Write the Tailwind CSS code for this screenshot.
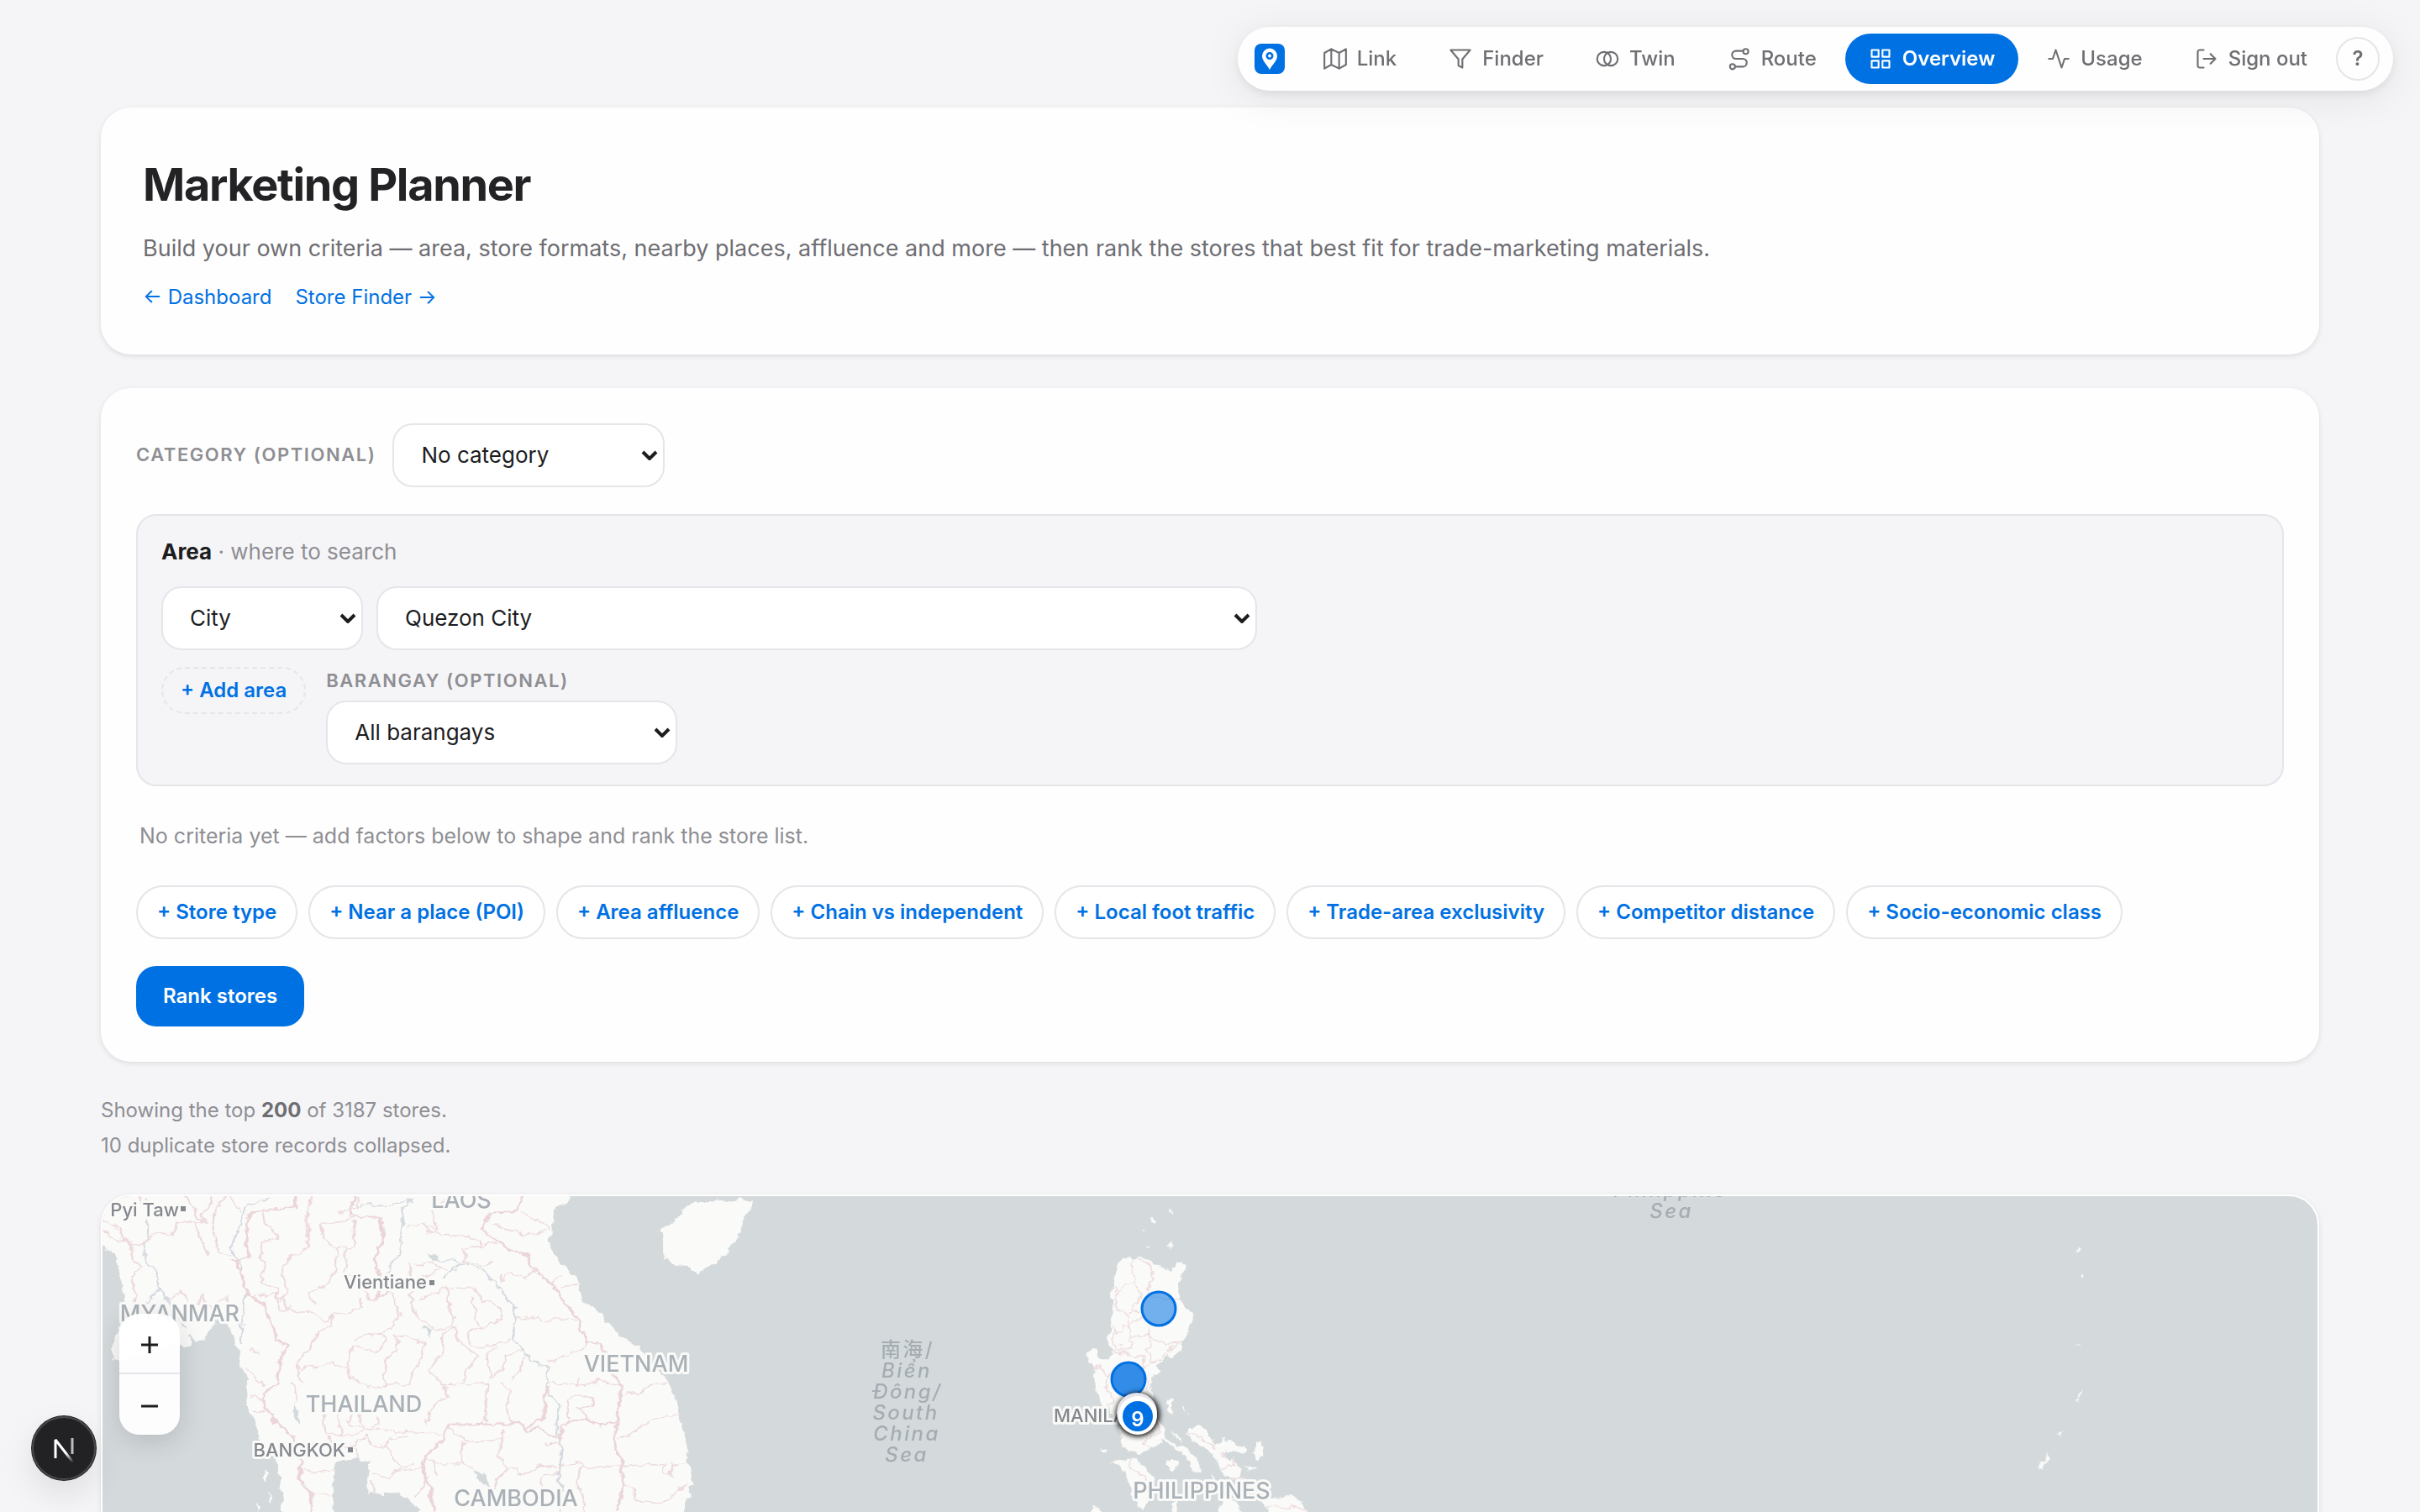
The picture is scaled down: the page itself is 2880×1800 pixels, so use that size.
<!DOCTYPE html>
<html lang="en">
<head>
    <meta charset="UTF-8">
    <meta name="viewport" content="width=device-width, initial-scale=1.0">
    <title>Marketing Planner</title>
    <!-- Tailwind CSS -->
    <script src="https://cdn.jsdelivr.net/npm/@tailwindcss/browser@4"></script>
</head>
<body class="min-h-screen bg-[#f5f5f7] font-['Inter','Liberation_Sans',sans-serif] text-2xl text-[#1d1d1f]">
    <!-- Floating navigation -->
    <nav class="fixed top-8 right-8 z-20 flex h-[76px] items-center gap-1.5 rounded-full bg-[#fefefe] pr-4 pl-5 font-medium text-[#6e6e73] shadow-[0_4px_12px_rgba(0,0,30,0.07),0_8px_48px_rgba(0,0,0,0.08)]">
        <a href="#" aria-label="Home" class="mr-3 flex size-9 items-center justify-center rounded-lg bg-[#0071e3]">
            <svg class="size-9" viewBox="0 0 36 36"><path d="M18 5.500a9 9 0 0 0-9 9c0 6 6 10.500 9 16.500 3-6 9-10.500 9-16.500a9 9 0 0 0-9-9z" fill="#fff"/><circle cx="18" cy="14.500" r="3.200" fill="#fff" stroke="#0071e3" stroke-width="2.600"/></svg>
        </a>
        <a href="#" class="flex h-15 items-center gap-3 rounded-full px-7">
            <svg class="size-7" viewBox="0 0 24 24" fill="none" stroke="currentColor" stroke-width="1.800" stroke-linecap="round" stroke-linejoin="round"><path d="M1 6v16l7-4 8 4 7-4V2l-7 4-8-4-7 4zM8 2v16M16 6v16"/></svg>
            Link
        </a>
        <a href="#" class="flex h-15 items-center gap-3 rounded-full px-7">
            <svg class="size-7" viewBox="0 0 24 24" fill="none" stroke="currentColor" stroke-width="1.800" stroke-linecap="round" stroke-linejoin="round"><path d="M22 3H2l8 9.460V19l4 2v-8.540L22 3z"/></svg>
            Finder
        </a>
        <a href="#" class="flex h-15 items-center gap-3 rounded-full px-7">
            <svg class="size-7" viewBox="0 0 24 24" fill="none" stroke="currentColor" stroke-width="1.800"><circle cx="8.500" cy="12" r="7"/><circle cx="15.500" cy="12" r="7"/></svg>
            Twin
        </a>
        <a href="#" class="flex h-15 items-center gap-3 rounded-full px-7">
            <svg class="size-7" viewBox="0 0 24 24" fill="none" stroke="currentColor" stroke-width="1.800" stroke-linecap="round"><circle cx="5" cy="20" r="2.600"/><circle cx="18.500" cy="4.500" r="2.600"/><path d="M8 20h7.500a4 4 0 0 0 0-8h-7a4 4 0 0 1 0-8H15.500"/></svg>
            Route
        </a>
        <a href="#" aria-current="page" class="flex h-15 items-center gap-3 rounded-full bg-[#0071e3] px-7 font-semibold text-white">
            <svg class="size-7" viewBox="0 0 24 24" fill="none" stroke="currentColor" stroke-width="1.800" stroke-linejoin="round"><rect x="3" y="3" width="7" height="7"/><rect x="14" y="3" width="7" height="7"/><rect x="3" y="14" width="7" height="7"/><rect x="14" y="14" width="7" height="7"/></svg>
            Overview
        </a>
        <a href="#" class="flex h-15 items-center gap-3 rounded-full px-7">
            <svg class="size-7" viewBox="0 0 24 24" fill="none" stroke="currentColor" stroke-width="1.800" stroke-linecap="round" stroke-linejoin="round"><path d="M22 12h-4l-3 9L9 3l-3 9H2"/></svg>
            Usage
        </a>
        <button type="button" class="flex h-15 items-center gap-3 rounded-full px-7">
            <svg class="size-7" viewBox="0 0 24 24" fill="none" stroke="currentColor" stroke-width="1.800" stroke-linecap="round" stroke-linejoin="round"><path d="M9 21H5a2 2 0 0 1-2-2V5a2 2 0 0 1 2-2h4M16 17l5-5-5-5M21 12H9"/></svg>
            Sign out
        </button>
        <button type="button" aria-label="Help" class="size-13 rounded-full border-2 border-[#e5e5ea] font-semibold">?</button>
    </nav>

    <main class="flex flex-col px-30 pt-32">
        <!-- Page header -->
        <header class="rounded-[36px] bg-[#fefefe] px-[50px] pt-15 pb-[50px] shadow-[0_2px_6px_rgba(0,0,20,0.10)]">
            <h1 class="text-[54px] leading-16 font-bold tracking-tight text-[#232326]">Marketing Planner</h1>
            <p class="mt-6 text-[27px] leading-10 text-[#6e6e73]">Build your own criteria — area, store formats, nearby places, affluence and more — then rank the stores that best fit for trade-marketing materials.</p>
            <div class="mt-5 flex gap-7 leading-9 text-[#0071e3]">
                <a href="#">← Dashboard</a>
                <a href="#">Store Finder →</a>
            </div>
        </header>

        <!-- Criteria builder -->
        <form class="mt-10 rounded-[36px] bg-[#fefefe] p-[42px] shadow-[0_2px_6px_rgba(0,0,20,0.10)]">
            <div class="flex items-center gap-5">
                <label for="category" class="text-[22px] font-semibold tracking-[0.07em] text-[#8e8e93] uppercase">Category (optional)</label>
                <div class="relative w-[324px]">
                    <select id="category" class="h-19 w-full appearance-none rounded-3xl border-2 border-[#e5e5ea] bg-white px-8 text-[26px]">
                        <option>No category</option>
                    </select>
                    <svg class="pointer-events-none absolute top-8 right-2 h-3 w-5" viewBox="0 0 20 12" fill="none" stroke="#1d1d1f" stroke-width="4"><path d="M2 2l8 8 8-8"/></svg>
                </div>
            </div>

            <fieldset class="mt-8 rounded-3xl border-2 border-[#e5e5ea] bg-[#f5f5f7] px-7 py-6">
                <p class="text-[26px] leading-[38px] text-[#8e8e93]"><strong class="text-[#1d1d1f]">Area</strong> · where to search</p>
                <div class="mt-[22px] flex gap-4">
                    <div class="relative w-60">
                        <select aria-label="Area type" class="h-19 w-full appearance-none rounded-3xl border-2 border-[#e5e5ea] bg-white px-8 text-[26px]">
                            <option>City</option>
                        </select>
                        <svg class="pointer-events-none absolute top-8 right-2 h-3 w-5" viewBox="0 0 20 12" fill="none" stroke="#1d1d1f" stroke-width="4"><path d="M2 2l8 8 8-8"/></svg>
                    </div>
                    <div class="relative w-full max-w-[1048px]">
                        <select aria-label="City" class="h-19 w-full appearance-none rounded-3xl border-2 border-[#e5e5ea] bg-white px-8 text-[26px]">
                            <option>Quezon City</option>
                        </select>
                        <svg class="pointer-events-none absolute top-8 right-2 h-3 w-5" viewBox="0 0 20 12" fill="none" stroke="#1d1d1f" stroke-width="4"><path d="M2 2l8 8 8-8"/></svg>
                    </div>
                </div>
                <div class="mt-5 flex items-start gap-6">
                    <button type="button" class="h-14 rounded-full border-2 border-dashed border-[#e5e5ea] px-[21px] font-semibold text-[#0071e3]">+ Add area</button>
                    <div class="flex flex-col gap-2">
                        <label for="barangay" class="text-[22px] leading-8 font-semibold tracking-[0.07em] text-[#8e8e93] uppercase">Barangay (optional)</label>
                        <div class="relative w-[418px]">
                            <select id="barangay" class="h-19 w-full appearance-none rounded-3xl border-2 border-[#e5e5ea] bg-white px-8 text-[26px]">
                                <option>All barangays</option>
                            </select>
                            <svg class="pointer-events-none absolute top-8 right-2 h-3 w-5" viewBox="0 0 20 12" fill="none" stroke="#1d1d1f" stroke-width="4"><path d="M2 2l8 8 8-8"/></svg>
                        </div>
                    </div>
                </div>
            </fieldset>

            <p class="px-1 py-10 text-[25px] leading-[38px] text-[#8e8e93]">No criteria yet — add factors below to shape and rank the store list.</p>

            <div class="flex flex-wrap gap-[13px] font-semibold text-[#0071e3]">
                <button type="button" class="h-16 rounded-full border-2 border-[#e5e5ea] bg-white px-[23px]">+ Store type</button>
                <button type="button" class="h-16 rounded-full border-2 border-[#e5e5ea] bg-white px-[23px]">+ Near a place (POI)</button>
                <button type="button" class="h-16 rounded-full border-2 border-[#e5e5ea] bg-white px-[23px]">+ Area affluence</button>
                <button type="button" class="h-16 rounded-full border-2 border-[#e5e5ea] bg-white px-[23px]">+ Chain vs independent</button>
                <button type="button" class="h-16 rounded-full border-2 border-[#e5e5ea] bg-white px-[23px]">+ Local foot traffic</button>
                <button type="button" class="h-16 rounded-full border-2 border-[#e5e5ea] bg-white px-[23px]">+ Trade-area exclusivity</button>
                <button type="button" class="h-16 rounded-full border-2 border-[#e5e5ea] bg-white px-[23px]">+ Competitor distance</button>
                <button type="button" class="h-16 rounded-full border-2 border-[#e5e5ea] bg-white px-[23px]">+ Socio-economic class</button>
            </div>
            <button type="submit" class="mt-8 block h-18 rounded-3xl bg-[#0071e3] px-8 font-semibold text-white">Rank stores</button>
        </form>

        <!-- Result summary -->
        <div class="mt-[37px] leading-[42px] text-[#8e8e93]">
            <p>Showing the top <strong class="text-[#6e6e73]">200</strong> of 3187 stores.</p>
            <p>10 duplicate store records collapsed.</p>
        </div>

        <!-- Map -->
        <section aria-label="Store map" class="relative mt-[37px] h-[1104px] overflow-hidden rounded-[36px] border-2 border-white bg-[#d4dadc] shadow-[0_2px_6px_rgba(0,0,20,0.10)]">
            <svg class="block h-full w-full" viewBox="122 1424 2636 1100" preserveAspectRatio="xMinYMin slice">
                <defs>
                    <filter id="rough" x="0" y="0" width="100%" height="100%">
                        <feTurbulence type="fractalNoise" baseFrequency="0.09" numOctaves="3" seed="4"/>
                        <feDisplacementMap in="SourceGraphic" scale="10" xChannelSelector="R" yChannelSelector="G"/>
                    </filter>
                    <filter id="soft" x="-50%" y="-50%" width="200%" height="200%"><feGaussianBlur stdDeviation="3"/></filter>
                </defs>

                <g filter="url(#rough)">
                    <!-- Mainland and Hainan -->
                    <g transform="translate(0 1400) scale(0.574 0.3333)" fill="#fafaf8">
                        <path d="M200 60H1188L1172 95 1150 110 1148 190 1135 235 1148 280 1165 320 1190 355 1203 380 1200 410 1215 450 1245 490 1265 540 1295 580 1325 615 1345 660 1370 710 1390 750 1398 800 1408 860 1418 910 1420 960 1425 1010 1438 1100 1425 1120 1435 1140 1420 1150V1210H874L850 1160 825 1130 790 1135 768 1130 758 1115 768 1020 740 1010 700 1020 688 1040 695 1080 688 1130 692 1210H583L585 1130 575 1040 565 990 540 960 535 910 520 850 513 790 512 720 500 680 492 620 485 590 478 540 465 515 450 515 440 540 425 580 408 592 393 570 395 600 380 612 372 600 247 660 232 658 235 590 247 540 258 480 258 430 250 370 243 320 232 270 215 250 200 240Z"/>
                        <path d="M1420 110L1455 88 1520 88 1540 80 1562 90 1558 125 1545 140 1535 190 1520 245 1500 290 1465 325 1450 345 1432 330 1405 320 1375 298V240L1372 190 1395 165 1415 135Z"/>
                        <path d="M550 1045L556 1060 552 1100 548 1090ZM556 1130L565 1150 558 1178ZM530 1170L538 1185 532 1200Z"/>
                    </g>
                    <!-- Lakes -->
                    <g transform="translate(0 1400) scale(0.574 0.3333)" fill="#d4dadc">
                        <path d="M888 270L905 280 908 300 898 310ZM983 1048L1005 1062 1020 1120 1005 1100 990 1075ZM612 800L618 850 620 880 610 865ZM875 543L895 545 892 575Z"/>
                    </g>
                    <!-- Rivers -->
                    <g transform="translate(0 1400) scale(0.574 0.3333)" fill="none" stroke="#d5dae0" stroke-width="4">
                        <path d="M305 72V240L298 290 325 350 330 410 350 450M330 400L300 460M560 75L510 110 490 210 478 260 500 330 510 420 500 540V600M860 75L835 120 830 270 800 350M740 100L800 110 860 80M905 300L935 302 960 310M920 365L955 315 995 325 1030 390 1068 470 1065 580 1100 655 1135 690 1130 750 1158 820 1155 920 1165 970 1160 1060 1162 1200M345 430L385 550"/>
                    </g>
                    <!-- Country borders -->
                    <g transform="translate(0 1400) scale(0.574 0.3333)" fill="none" stroke="#ebd5d8" stroke-width="6">
                        <path d="M615 72L612 115 535 120 515 140 512 200 510 240 515 290 485 300 490 330 500 335 505 380 512 420 545 455 555 500 570 545 575 590 600 605 582 650 575 740 548 775 550 830 575 885 610 930 625 1020 620 1080 645 1130 648 1200"/>
                        <path d="M735 72L725 145 790 150 795 230 775 300 785 350 790 400 778 445 765 440M780 440L805 410"/>
                        <path d="M1085 72L1065 130 1015 130 998 190 1035 235 1060 265 1095 280 1100 320 1145 390 1170 450 1200 515 1215 590 1245 600 1255 630 1270 710 1290 740 1285 800 1282 880 1245 895 1215 865 1165 895 1160 940 1115 900 1095 910 1080 885 930 890 915 950 880 1000 875 1060 890 1110 900 1200"/>
                        <path d="M1282 880L1270 940 1290 1030V1110L1280 1200M1135 750L1125 870 1090 900"/>
                    </g>
                    <!-- Province borders -->
                    <g transform="translate(0 1400) scale(0.574 0.3333)" fill="none" stroke="#eddadd" stroke-width="4">
                        <path d="M290 72L305 120M213 160L250 190 255 230 300 245 315 205 360 205 365 165H425L410 150 395 100 385 72M213 190L245 230 270 240 275 300 295 320 275 360 280 440 275 460M440 72L420 130 425 165M465 72L445 130 440 190 455 275 480 285M405 165L415 220 430 280M350 450L375 405 395 460 410 455 420 430 440 470 470 430 480 470"/>
                        <path d="M500 130L475 72M545 120L550 170 575 210V225L545 235 540 300 550 320 540 380 575 400 570 440 590 435 600 480M645 72L635 160 640 220 630 280 600 290 585 350 595 400 580 450M670 172L720 160 735 150M665 172L670 220 700 255 735 250 735 160M700 255L695 310 700 340 680 385 640 420 650 460M718 255L715 340 745 390 770 440"/>
                        <path d="M740 72L745 110 700 130M845 185L880 172 890 200 935 210 995 225 1000 250 960 260 965 310M885 180L905 190 895 120 940 72M860 320L890 310 930 340M850 315L855 370 900 350 910 330M965 310L1010 318 1020 300M1040 350L1035 380 1060 345 1090 365 1110 330M1145 185L1110 155 1080 125M1020 170L1090 210 1145 190M980 255L1030 240M1165 350L1140 380M1200 380L1165 400"/>
                        <path d="M520 430L545 430 570 420 580 480 640 480 660 500 680 520 690 495 735 480 750 470 745 430M690 500L685 540 660 560 640 620 615 670 625 740M615 690L690 670 720 680 725 720 750 740 765 760M735 590L750 570 790 560 800 590 780 630 730 610 725 680M790 560L810 550 830 500 815 420 800 415M800 755L798 670 830 590 815 570"/>
                        <path d="M815 565L880 600 875 650 855 700 850 740 765 755M860 400L850 420 860 500 900 545 935 535 945 510 930 470 925 395M870 440L925 400 985 400 1000 440 1035 465 1040 510 1000 545 985 500 980 430M945 540L915 560 915 640 885 690 920 745M940 540L955 600 990 640 965 690 960 740M1000 545L970 560 980 610 1020 605 1050 590 1060 575"/>
                        <path d="M1065 510L1110 500 1125 512 1200 515M1085 625L1050 640 1045 690 1015 720 1010 640 1030 610M1085 640L1080 700 1060 730M1135 665L1180 640 1205 620 1220 590M1130 740L1165 740 1195 750 1200 720M1195 750L1240 730 1290 745M1295 780L1330 770 1350 745 1385 740M1180 870L1175 800 1195 780 1225 790 1230 820 1200 830 1220 870"/>
                        <path d="M920 745L960 745 1000 740 1010 760 1005 880M920 745L930 790 900 810 885 890M1040 740L1060 760 1050 830 1060 885M670 840L675 920 740 925 760 905 810 910 915 920M700 840L705 920M735 840L720 880 755 900 745 850M780 860L785 890 760 905M680 930L690 965 730 970 760 930 770 960 800 970 805 940 845 930M680 960L685 1005M740 970L745 1010M800 970L830 1040 860 1030M770 1060L800 1080 830 1050 875 1040M770 1080L775 1130"/>
                        <path d="M930 900L970 945H1040L1045 910M960 945V1030L905 1025M880 1015H900L905 1070M960 1030L985 1045M1040 945L1035 1000 1050 1045 1075 1040 1080 1070 1120 1030 1165 1040 1200 1025 1215 1045 1285 1035M1130 960L1165 955M1050 1045L1020 1120M1205 1040L1195 1100 1215 1160 1210 1200M1290 1035L1380 1030 1375 1060 1390 1075 1395 1030 1420 1025M1290 1110L1315 1115 1320 1160 1370 1170 1425 1100M1280 940L1310 920 1350 870 1405 850M1160 1060L1120 1080 1125 1130M890 1070L860 1150M625 1055L660 1060 690 1050M645 1135L690 1138M520 790L545 800M515 620L540 640M510 690L550 750M605 740L615 800M525 835L550 840"/>
                    </g>

                    <!-- Luzon and nearby islands -->
                    <g transform="translate(1220 1480) scale(0.3333)">
                        <g fill="#fafaf8">
                            <path d="M335 65L360 60 370 45 385 55 405 48 430 55 465 75 490 90 520 95 540 85 550 60 570 72 573 95 553 115 550 195 562 225 585 240 600 262 590 300 575 330 555 365V385L530 410 510 395 480 420 470 440 478 460 455 485 445 520 460 560 475 600V630L495 660 490 690 505 700 540 725 560 720 580 735 600 760 620 790V815H600L585 780 570 755 545 745 510 715 480 700 485 715 455 725 430 750 405 755 385 735 375 745 345 730 340 680 330 640 300 590 270 585 265 545 250 500 245 460 235 430 222 425 225 390 240 368 250 375 255 400 275 412H300L310 385 298 370 297 340 305 300 315 260 312 210 303 195 310 165 320 130 325 95Z"/>
                            <path d="M570 685L590 660 620 655 655 670 670 700 675 725 690 715 705 695 725 710 750 715 795 740 770 745 720 740 710 755 740 770 755 790 768 810 765 835 790 840 760 850 735 840 708 835 705 805 690 780 670 760 650 745 620 715Z"/>
                            <path d="M825 700L840 700 845 720 857 725 850 760 830 768 808 752 822 730ZM505 775L525 765 545 780 540 800 525 812 505 795ZM300 778L320 770 350 775 390 770 410 790 440 810 455 840 460 860 450 900 425 950 405 935 380 900 370 850 350 810 330 790Z"/>
                            <path d="M505 560H530L525 580 532 595 520 612 510 600 514 580ZM520 672L545 685 570 705 545 697ZM266 728L285 728 300 745 285 745ZM778 795L805 800 830 815 795 812ZM662 825L680 840 692 868 678 862ZM695 930L740 912 780 970H700ZM520 925L545 918 540 970H522ZM235 935L290 970H235ZM845 905L900 915 945 900 965 905 985 925 990 940 1020 970H870ZM555 587L568 590 565 597ZM575 600L588 603 580 608Z"/>
                            <path d="M430 10L442 5 458 8 440 15ZM508 14L512 0 522-8 520 4ZM445-86L462-88 468-74 455-74ZM515-118L524-120 522-108ZM419-52L426-46 424-36ZM700 695L712 690 715 700Z"/>
                        </g>
                        <g fill="none" stroke="#eddbde" stroke-width="4">
                            <path d="M388 55L385 115 390 140 360 150 330 175 320 210 335 240 365 255 380 235 405 210 410 180 390 140M405 55L460 95 455 130 435 145 445 185 430 195M380 240L410 250M425 270L370 290 365 260M445 185L500 200H555M370 290L380 335 440 325 445 300M310 290L330 325 350 290 375 300 378 370 350 385 320 380 318 300M440 320L500 365 560 348 455 428 435 380 455 360 445 325M500 365L540 350M310 390L380 395 420 405 425 450 470 420M240 450L270 440 290 475 280 510 310 540 315 570 290 585M290 475L320 455M425 450L440 490 435 530M320 150L325 190M330 360L345 365 335 370M570 690L600 680 650 705 675 730M370 800L425 835 430 870M375 770L370 800M690 755L715 750 700 765M705 805L745 790 740 770M735 840L790 838M430 700L425 720 455 727M430 700L475 680V640M855 945L900 935 920 950 960 940 1010 955"/>
                        </g>
                    </g>

                    <!-- Mariana Islands -->
                    <g transform="translate(1880 1400) scale(0.6378 0.3333)" fill="#fafaf8">
                        <path d="M928 258L933 262 932 270 928 268ZM937 350L942 352 940 360 935 367ZM928 605L935 610 929 612ZM938 765L941 768 935 790 931 786ZM926 792L930 796 929 812 925 806ZM892 920L902 915 898 926 893 926ZM873 990L880 1000 866 1028 865 1050 858 1045 857 1020 866 1015Z"/>
                    </g>
                </g>

                <!-- Place labels -->
                <g font-size="27" fill="#a9b0b6" stroke="#fafaf8" stroke-width="6" stroke-linejoin="round" paint-order="stroke" text-anchor="middle" class="font-medium">
                    <text x="549" y="1438">LAOS</text>
                    <text x="214" y="1573">MYANMAR</text>
                    <text x="757" y="1633">VIETNAM</text>
                    <text x="433" y="1681">THAILAND</text>
                    <text x="614" y="1793">CAMBODIA</text>
                    <text x="1430" y="1784">PHILIPPINES</text>
                </g>
                <g font-size="22" fill="#85888e" stroke="#fafaf8" stroke-width="6" stroke-linejoin="round" paint-order="stroke" class="font-medium">
                    <text x="213" y="1448" text-anchor="end">y Pyi Taw</text>
                    <text x="508" y="1534" text-anchor="end">Vientiane</text>
                    <text x="411" y="1734" text-anchor="end">BANGKOK</text>
                    <text x="1254" y="1693">MANILA</text>
                    <path d="M215 1436h6v6h-6zM511 1524h6v6h-6zM414 1723h6v6h-6z" stroke="none"/>
                </g>
                <g font-size="24" fill="#a5adb3" text-anchor="middle" class="font-['Inter','Noto_Sans_CJK_SC',sans-serif] font-medium tracking-widest italic">
                    <text x="1080" y="1615" class="not-italic">南海/</text>
                    <text x="1079" y="1640">Biển</text>
                    <text x="1080" y="1665">Đông/</text>
                    <text x="1078" y="1690">South</text>
                    <text x="1079" y="1715">China</text>
                    <text x="1079" y="1740">Sea</text>
                    <text x="1988" y="1425">Philippine</text>
                    <text x="1989" y="1450">Sea</text>
                </g>

                <!-- Store markers -->
                <circle cx="1379" cy="1558" r="20" fill="#0071e3" fill-opacity="0.55" stroke="#0071e3" stroke-width="3"/>
                <circle cx="1343" cy="1642" r="20" fill="#0071e3" fill-opacity="0.8" stroke="#0071e3" stroke-width="3"/>
                <circle cx="1354" cy="1684" r="26" filter="url(#soft)"/>
                <circle cx="1353" cy="1682" r="24" fill="#e4e4ea"/>
                <circle cx="1354" cy="1685" r="23" fill="#fff"/>
                <circle cx="1354" cy="1686" r="18" fill="#0071e3"/>
                <text x="1354" y="1698" font-size="24" font-weight="600" fill="#fff" text-anchor="middle">9</text>
            </svg>

            <!-- Zoom controls -->
            <div class="absolute top-[140px] left-5 flex w-18 flex-col overflow-hidden rounded-3xl bg-white/95 shadow-[0_8px_32px_rgba(0,0,0,0.14)]">
                <button type="button" aria-label="Zoom in" class="flex h-18 items-center justify-center border-b-2 border-[#e5e5ea] pt-1">
                    <svg class="size-5" viewBox="0 0 20 20" stroke="#1d1d1f" stroke-width="3"><path d="M10 0v20M0 10h20"/></svg>
                </button>
                <button type="button" aria-label="Zoom out" class="flex h-18 items-center justify-center pt-1">
                    <svg class="size-5" viewBox="0 0 20 20" stroke="#1d1d1f" stroke-width="3"><path d="M0 10h20"/></svg>
                </button>
            </div>
        </section>
    </main>

    <!-- Dev tools badge -->
    <button type="button" aria-label="Open dev tools" class="fixed bottom-[38px] left-[38px] z-20 flex size-19 items-center justify-center rounded-full border-2 border-[#4a4a4c] bg-[#222224] shadow-[0_0_0_1px_#222224,0_16px_40px_rgba(0,0,0,0.10)]">
        <svg class="size-10" viewBox="0 0 40 40" fill="none" stroke-width="3">
            <defs>
                <linearGradient id="diag" x1="20" y1="20" x2="32" y2="36" gradientUnits="userSpaceOnUse"><stop offset="0.300" stop-color="#fff"/><stop offset="1" stop-color="#fff" stop-opacity="0"/></linearGradient>
                <linearGradient id="stem" x1="0" y1="8" x2="0" y2="27" gradientUnits="userSpaceOnUse"><stop stop-color="#fff"/><stop offset="1" stop-color="#fff" stop-opacity="0"/></linearGradient>
            </defs>
            <path d="M10 32V10L31 37" stroke="url(#diag)" stroke-linejoin="bevel"/>
            <path d="M30 8v19" stroke="#fff" stroke-opacity="0.700"/>
        </svg>
    </button>
</body>
</html>
